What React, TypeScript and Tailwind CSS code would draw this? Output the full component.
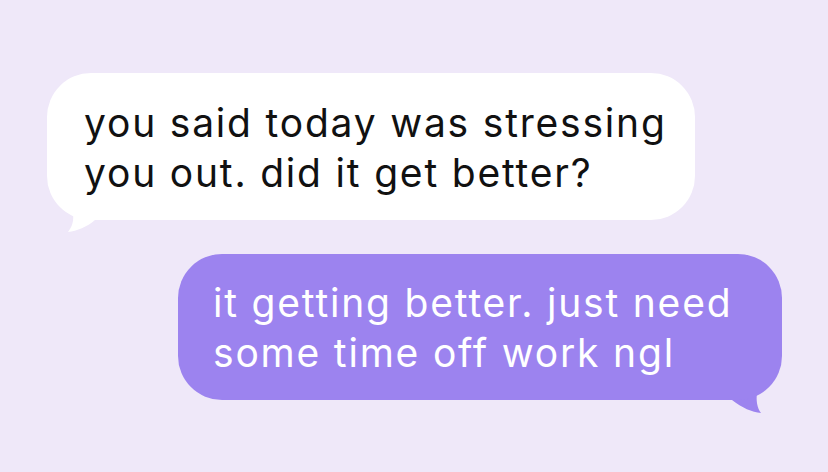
import React from "react";

type BubbleProps = {
  lines: string[];
  side: "left" | "right";
};

function Bubble({ lines, side }: BubbleProps) {
  const mine = side === "right";
  return (
    <div className={`relative ${mine ? "self-end" : "self-start"}`}>
      <div
        className={`relative z-10 rounded-[44px] pb-[22px] text-[39px] leading-[50px] tracking-[1.8px] ${
          mine
            ? "w-[604px] bg-[#9c83ef] pt-[24px] pl-[35px] text-white"
            : "w-[648px] bg-white pt-[25px] pl-[37px] text-[#111111]"
        }`}
      >
        {lines.map((l) => (
          <div key={l} className="whitespace-nowrap">
            {l}
          </div>
        ))}
      </div>
      {/* little tail poking out under the bubble corner */}
      {mine ? (
        <svg className="absolute right-[16px] bottom-[-14px] z-0" width="40" height="30" viewBox="0 0 40 30">
          <path d="M0 0 L31 0 L31 9 C30 16 31 24 35 29 C26 28 16 24 6 16 L0 16 Z" fill="#9c83ef" />
        </svg>
      ) : (
        <svg className="absolute left-[18px] bottom-[-13px] z-0" width="40" height="30" viewBox="0 0 40 30">
          <path d="M40 0 L8 0 L8 10 C9 18 7 24 3 29 C12 28 22 24 30 17 L40 17 Z" fill="#ffffff" />
        </svg>
      )}
    </div>
  );
}

export default function App() {
  return (
    <div
      className="flex h-[472px] w-[828px] flex-col gap-[34px] bg-[#efe8f9] pt-[73px] pl-[47px] pr-[46px]"
      style={{ fontFamily: "Inter, 'Noto Sans', sans-serif" }}
    >
      <Bubble side="left" lines={["you said today was stressing", "you out. did it get better?"]} />
      <Bubble side="right" lines={["it getting better. just need", "some time off work ngl"]} />
    </div>
  );
}
